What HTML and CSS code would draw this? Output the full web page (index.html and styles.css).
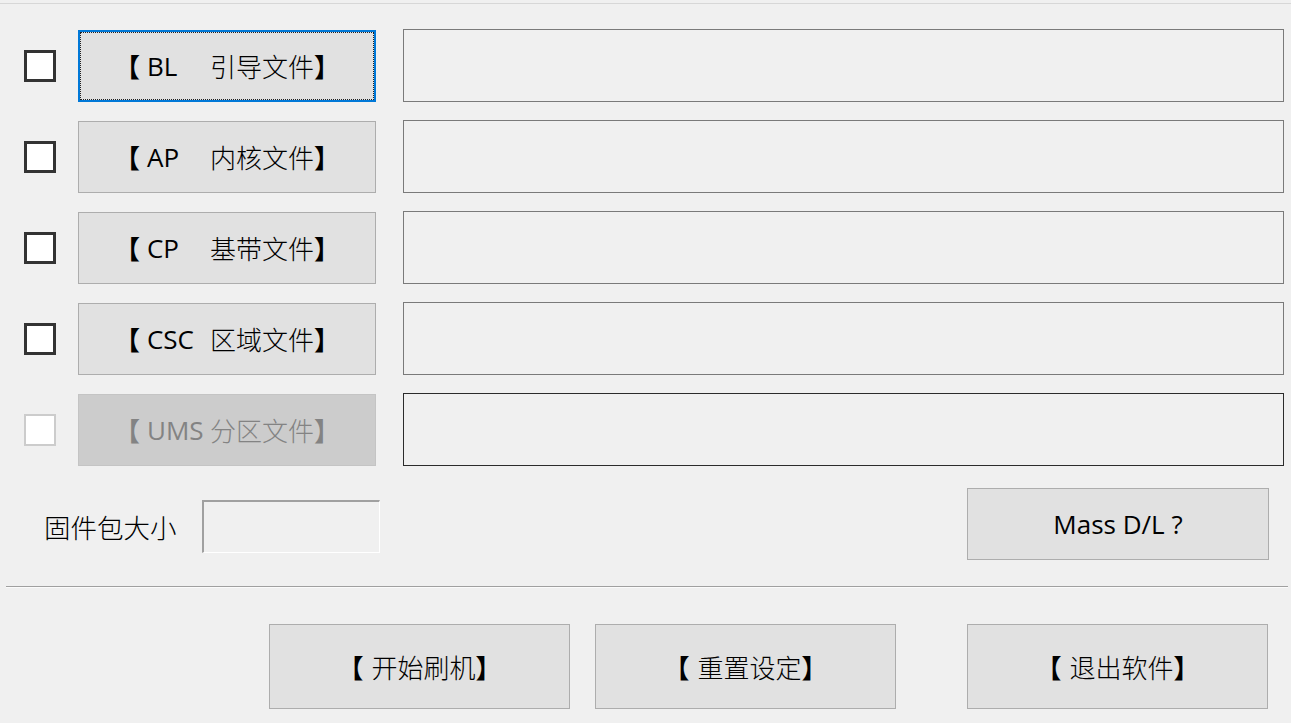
FILE: index.html
```html
<!DOCTYPE html>
<html lang="zh-CN">
<head>
<meta charset="utf-8">
<title>Flash Tool</title>
<link rel="stylesheet" href="styles.css">
</head>
<body>
<div class="topline"></div>
<div class="rows">
  <div class="row">
    <span class="check"></span>
    <button class="filebtn focused"><span class="br">【</span><span class="code">BL</span><span class="cn">引导文件</span><span class="br">】</span></button>
    <div class="path"></div>
  </div>
  <div class="row">
    <span class="check"></span>
    <button class="filebtn"><span class="br">【</span><span class="code">AP</span><span class="cn">内核文件</span><span class="br">】</span></button>
    <div class="path"></div>
  </div>
  <div class="row">
    <span class="check"></span>
    <button class="filebtn"><span class="br">【</span><span class="code">CP</span><span class="cn">基带文件</span><span class="br">】</span></button>
    <div class="path"></div>
  </div>
  <div class="row">
    <span class="check"></span>
    <button class="filebtn"><span class="br">【</span><span class="code">CSC</span><span class="cn">区域文件</span><span class="br">】</span></button>
    <div class="path"></div>
  </div>
  <div class="row">
    <span class="check disabled"></span>
    <button class="filebtn disabled"><span class="br">【</span><span class="code">UMS</span><span class="cn">分区文件</span><span class="br">】</span></button>
    <div class="path dark"></div>
  </div>
</div>
<div class="sizerow">
  <span class="label">固件包大小</span>
  <div class="sizebox"></div>
  <button class="mass">Mass D/L ?</button>
</div>
<div class="separator"></div>
<div class="actions">
  <button class="action"><span class="br">【</span><span class="cn lead">开始刷机</span><span class="br">】</span></button>
  <button class="action"><span class="br">【</span><span class="cn lead">重置设定</span><span class="br">】</span></button>
  <button class="action exit"><span class="br">【</span><span class="cn lead">退出软件</span><span class="br">】</span></button>
</div>
</body>
</html>
```

FILE: styles.css
```css
html, body {
  margin: 0;
  padding: 0;
  background: #f0f0f0;
  font-family: "Open Sans", "Noto Sans CJK SC", sans-serif;
  color: #000;
  overflow: hidden;
}

.topline {
  margin-top: 3px;
  height: 1px;
  background: #d7d7d7;
}

.rows {
  display: flex;
  flex-direction: column;
  gap: 18px;
  margin-top: 25px;
  padding-left: 24px;
}

.row {
  display: flex;
  align-items: center;
  height: 73px;
}

.check {
  box-sizing: border-box;
  width: 32px;
  height: 32px;
  border: 3px solid #333;
  background: #fff;
  flex: none;
}

.check.disabled {
  border: 2px solid #cccccc;
}

button {
  font-family: inherit;
  color: #000;
  padding: 0;
  cursor: default;
}

.filebtn {
  box-sizing: border-box;
  margin-left: 22px;
  width: 298px;
  height: 72px;
  background: #e1e1e1;
  border: 1px solid #adadad;
  display: flex;
  align-items: center;
  justify-content: center;
  font-size: 26px;
  line-height: 1;
  flex: none;
}

.filebtn.focused {
  border: 2px solid #0078d7;
  outline: 1px dotted #222;
  outline-offset: -3px;
}

.filebtn.disabled {
  background: #cccccc;
  border-color: #c4c4c4;
  color: #838383;
}

.br {
  font-family: "Noto Sans CJK SC", sans-serif;
  font-weight: 700;
}

.cn {
  font-family: "Noto Sans CJK SC", sans-serif;
  font-weight: 300;
}

.cn.lead {
  margin-left: 8px;
}

.filebtn .code {
  display: inline-block;
  width: 63px;
  margin-left: 7px;
  text-align: left;
}

.path {
  box-sizing: border-box;
  margin-left: 27px;
  width: 881px;
  height: 73px;
  border: 1px solid #7a7a7a;
  background: #f0f0f0;
  flex: none;
}

.path.dark {
  border-color: #2b2b2b;
}

.sizerow {
  display: flex;
  align-items: center;
  margin-top: 22px;
  height: 72px;
  padding-left: 44px;
}

.label {
  font-family: "Noto Sans CJK SC", sans-serif;
  font-weight: 300;
  font-size: 26.5px;
  line-height: 1;
  margin-top: 6px;
  width: 134px;
  white-space: nowrap;
}

.sizebox {
  box-sizing: border-box;
  margin-left: 24px;
  margin-top: 4px;
  width: 178px;
  height: 53px;
  border-top: 2px solid #a0a0a0;
  border-left: 2px solid #a0a0a0;
  border-bottom: 1px solid #ffffff;
  border-right: 1px solid #ffffff;
  background: #f0f0f0;
}

.mass {
  box-sizing: border-box;
  margin-left: 587px;
  width: 302px;
  height: 72px;
  background: #e1e1e1;
  border: 1px solid #adadad;
  font-size: 26px;
  line-height: 1;
}

.separator {
  margin: 26px 3px 0 6px;
  height: 1px;
  background: #a0a0a0;
  border-bottom: 1px solid #fbfbfb;
}

.actions {
  display: flex;
  margin-top: 36px;
  padding-left: 269px;
  gap: 25px;
}

.action {
  box-sizing: border-box;
  width: 301px;
  height: 85px;
  background: #e1e1e1;
  border: 1px solid #adadad;
  font-size: 26px;
  line-height: 1;
  display: flex;
  align-items: center;
  justify-content: center;
}

.action.exit {
  margin-left: 46px;
}
```
